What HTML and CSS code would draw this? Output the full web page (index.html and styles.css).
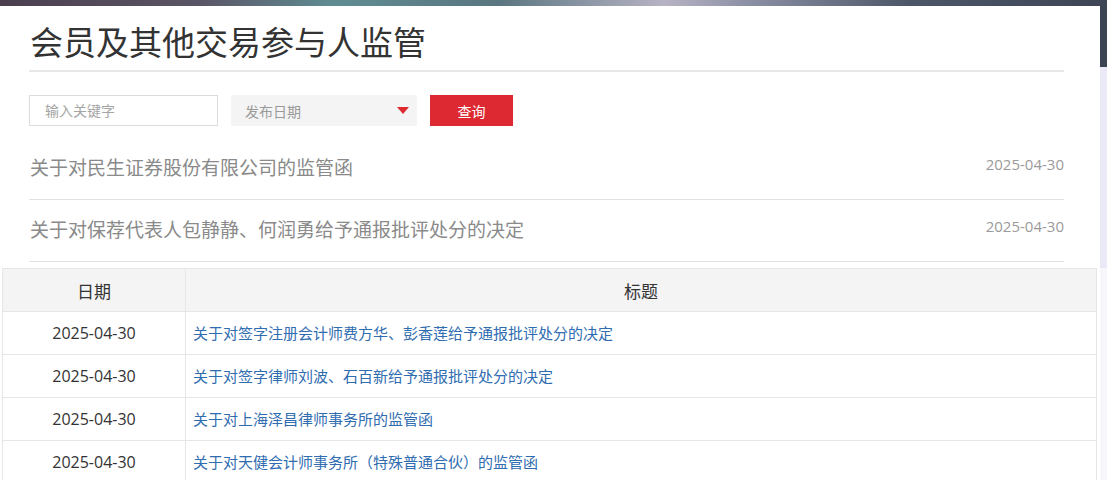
FILE: index.html
```html
<!DOCTYPE html>
<html lang="zh-CN">
<head>
    <meta charset="UTF-8">
    <meta name="viewport" content="width=device-width, initial-scale=1.0">
    <title>会员及其他交易参与人监管</title>
    <link rel="stylesheet" href="styles.css">
</head>
<body>
    <div class="topband"></div>
    <div class="shell">
        <div class="panel">
            <div class="head">
                <h1 class="title">会员及其他交易参与人监管</h1>
                <div class="search">
                    <input type="text" class="kw" placeholder="输入关键字">
                    <div class="picker">
                        <span>发布日期</span>
                        <i class="arrow"></i>
                    </div>
                    <button class="query">查询</button>
                </div>
                <ul class="news">
                    <li>
                        <span class="txt">关于对民生证券股份有限公司的监管函</span>
                        <span class="date">2025-04-30</span>
                    </li>
                    <li>
                        <span class="txt">关于对保荐代表人包静静、何润勇给予通报批评处分的决定</span>
                        <span class="date">2025-04-30</span>
                    </li>
                </ul>
            </div>
            <div class="tablewrap">
                <table class="grid">
                    <tr>
                        <th class="c-date">日期</th>
                        <th>标题</th>
                    </tr>
                    <tr>
                        <td class="c-date">2025-04-30</td>
                        <td><a href="#">关于对签字注册会计师费方华、彭香莲给予通报批评处分的决定</a></td>
                    </tr>
                    <tr>
                        <td class="c-date">2025-04-30</td>
                        <td><a href="#">关于对签字律师刘波、石百新给予通报批评处分的决定</a></td>
                    </tr>
                    <tr>
                        <td class="c-date">2025-04-30</td>
                        <td><a href="#">关于对上海泽昌律师事务所的监管函</a></td>
                    </tr>
                    <tr>
                        <td class="c-date">2025-04-30</td>
                        <td><a href="#">关于对天健会计师事务所（特殊普通合伙）的监管函</a></td>
                    </tr>
                </table>
            </div>
        </div>
        <div class="rail"></div>
    </div>
</body>
</html>
```

FILE: styles.css
```css
body{
    margin:0;
    background:#fff;
    font-family:"Open Sans","Noto Sans CJK SC",sans-serif;
    overflow:hidden;
}
.topband{
    height:6px;
    background:linear-gradient(90deg,#4b3f4e 0%,#5a5566 18%,#5f8c92 30%,#5a7680 45%,#b7b3c4 60%,#8a8ea3 68%,#4d5768 82%,#3d4555 100%);
}
.shell{
    display:flex;
}
.panel{
    width:1100px;
    background:#fff;
}
.rail{
    width:7px;
    background:linear-gradient(180deg,#3c4352 0,#3c4352 61px,#e9eaf6 61px,#e9eaf6 262px,#f7f7fb 262px);
}
.head{
    padding:0 36px 0 29px;
}
.title{
    margin:0;
    padding:15px 0 5px 1px;
    font-size:33px;
    line-height:44px;
    font-weight:normal;
    color:#333;
    border-bottom:2px solid #e7e7e7;
}
/* 搜索条 */
.search{
    display:flex;
    gap:13px;
    margin-top:23px;
    height:31px;
}
.kw{
    box-sizing:border-box;
    width:189px;
    height:31px;
    border:1px solid #dcdcdc;
    padding:0 15px;
    font-family:inherit;
    font-size:14px;
    outline:none;
}
.kw::placeholder{
    color:#a5a5a5;
}
.picker{
    width:186px;
    background:#f4f4f4;
    display:flex;
    align-items:center;
    justify-content:space-between;
    padding:0 8px 0 14px;
    box-sizing:border-box;
    font-size:14px;
    color:#9a9a9a;
}
.arrow{
    width:0;
    height:0;
    border-left:6px solid transparent;
    border-right:6px solid transparent;
    border-top:7px solid #dd2a31;
}
.query{
    width:83px;
    height:31px;
    border:0;
    background:#dd2a32;
    color:#fff;
    font-family:inherit;
    font-size:14px;
}
/* 列表 */
.news{
    list-style:none;
    margin:12px 0 0;
    padding:0;
}
.news li{
    height:61px;
    display:flex;
    align-items:center;
    justify-content:space-between;
    border-bottom:1px solid #e2e2e2;
}
.news .txt{
    font-size:19px;
    color:#8a8a8a;
    padding-left:1px;
    margin-top:-3px;
}
.news .date{
    font-size:15px;
    color:#9a9a9a;
    margin-top:-10px;
}
/* 表格 */
.tablewrap{
    padding:6px 3px 0 2px;
}
.grid{
    width:100%;
    border-collapse:collapse;
}
.grid th,.grid td{
    border:1px solid #e6e6e6;
    height:42px;
    padding:0;
}
.grid th{
    background:#f4f4f4;
    font-weight:normal;
    font-size:17px;
    color:#333;
}
.grid .c-date{
    width:182px;
    text-align:center;
}
.grid td.c-date{
    font-size:16px;
    color:#333;
}
.grid td a{
    padding-left:7px;
    font-size:15px;
    color:#2f6cb0;
    text-decoration:none;
}
```
